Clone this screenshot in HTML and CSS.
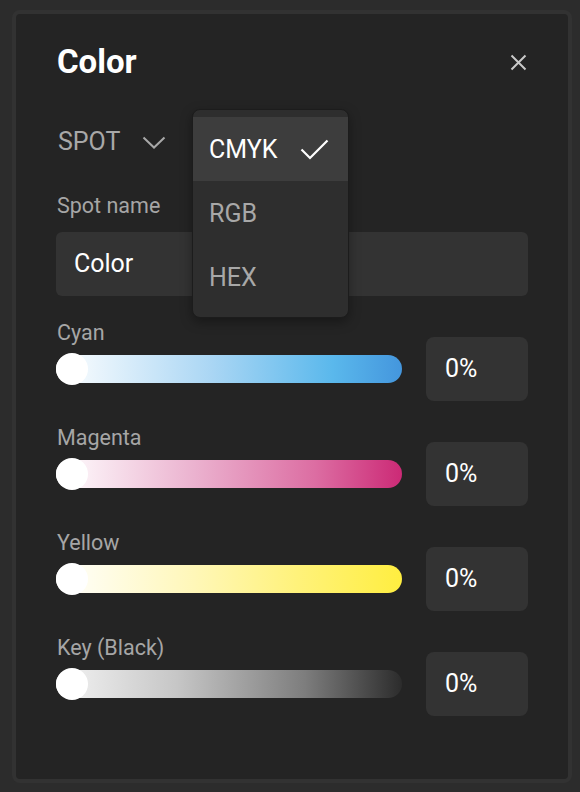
FILE: index.html
```html
<!DOCTYPE html>
<html lang="en">
<head>
<meta charset="utf-8">
<title>Color</title>
<link rel="stylesheet" href="styles.css">
</head>
<body>
<div class="panel">
  <div class="header">
    <h1 class="title">Color</h1>
    <button class="close" aria-label="Close">
      <svg width="17" height="17" viewBox="0 0 17 17"><path d="M1.5 1.5L15.5 15.5M15.5 1.5L1.5 15.5" stroke="#c9c9c9" stroke-width="2" fill="none"/></svg>
    </button>
  </div>

  <div class="mode">
    <span class="mode-label">SPOT</span>
    <svg class="chev" width="24" height="13" viewBox="0 0 24 13"><path d="M1.5 1.5L12 11.5L22.5 1.5" stroke="#a8a8a8" stroke-width="2" fill="none"/></svg>
  </div>

  <div class="field-label spot-label">Spot name</div>
  <div class="input">Color</div>

  <div class="sliders">
    <div class="group">
      <div class="field-label">Cyan</div>
      <div class="slider-row">
        <div class="track cyan"><span class="knob"></span></div>
        <div class="value">0%</div>
      </div>
    </div>
    <div class="group">
      <div class="field-label">Magenta</div>
      <div class="slider-row">
        <div class="track magenta"><span class="knob"></span></div>
        <div class="value">0%</div>
      </div>
    </div>
    <div class="group">
      <div class="field-label">Yellow</div>
      <div class="slider-row">
        <div class="track yellow"><span class="knob"></span></div>
        <div class="value">0%</div>
      </div>
    </div>
    <div class="group">
      <div class="field-label">Key (Black)</div>
      <div class="slider-row">
        <div class="track key"><span class="knob"></span></div>
        <div class="value">0%</div>
      </div>
    </div>
  </div>

  <div class="menu">
    <div class="menu-item active">
      <span>CMYK</span>
      <svg width="29" height="21" viewBox="0 0 29 21"><path d="M1.5 10.5L10 19L27.5 1.5" stroke="#ffffff" stroke-width="2.2" fill="none"/></svg>
    </div>
    <div class="menu-item">RGB</div>
    <div class="menu-item">HEX</div>
  </div>
</div>
</body>
</html>
```

FILE: styles.css
```css
* { box-sizing: border-box; }

html, body {
  margin: 0;
  background: #2c2c2c;
}

body {
  padding: 10px 8px 0 12px;
  font-family: Roboto, "Liberation Sans", Arial, sans-serif;
}

.panel {
  position: relative;
  width: 560px;
  height: 773px;
  border: 4px solid #323232;
  border-radius: 8px;
  background: #242424;
  padding: 28px 40px 0 40px;
}

.header {
  display: flex;
  align-items: center;
  justify-content: space-between;
  height: 40px;
}

.title {
  margin: 0 0 0 1px;
  font-size: 33px;
  font-weight: 700;
  line-height: 40px;
  color: #ffffff;
}

.close {
  display: flex;
  padding: 0;
  margin-right: 1px;
  border: 0;
  background: none;
}

.mode {
  display: flex;
  align-items: center;
  gap: 22px;
  height: 40px;
  margin-top: 40px;
  padding-left: 2px;
}

.mode-label {
  font-size: 25px;
  line-height: 40px;
  color: #a8a8a8;
}

.chev { margin-top: 1px; }

.field-label {
  font-size: 21.5px;
  line-height: 23px;
  color: #a6a6a6;
  padding-left: 1px;
}

.spot-label {
  margin-top: 32px;
}

.input {
  margin-top: 15px;
  height: 64px;
  border-radius: 6px;
  background: #333333;
  padding-left: 18px;
  font-size: 25px;
  line-height: 64px;
  color: #ffffff;
}

.sliders {
  display: flex;
  flex-direction: column;
  gap: 25px;
  margin-top: 25px;
}

.group .field-label {
  margin-bottom: -7px;
}

.slider-row {
  display: flex;
  align-items: center;
  gap: 24px;
  height: 64px;
}

.track {
  position: relative;
  flex: 1;
  height: 28px;
  border-radius: 14px;
}

.knob {
  position: absolute;
  left: 0;
  top: -2px;
  width: 32px;
  height: 32px;
  border-radius: 50%;
  background: #ffffff;
}

.cyan { background: linear-gradient(90deg, #ffffff 0%, #aad6f4 45%, #5ab8ec 80%, #4496dd 100%); }
.magenta { background: linear-gradient(90deg, #ffffff 0%, #ebb2cf 40%, #dc6da2 75%, #cc2a76 100%); }
.yellow { background: linear-gradient(90deg, #ffffff 0%, #fff7b8 40%, #fff27a 70%, #ffee40 100%); }
.key { background: linear-gradient(90deg, #f4f4f4 0%, #c6c6c6 35%, #7d7d7d 72%, #2c2c2c 100%); }

.value {
  width: 102px;
  height: 64px;
  border-radius: 8px;
  background: #333333;
  padding-left: 19px;
  font-size: 25px;
  line-height: 64px;
  color: #ffffff;
}

.menu {
  position: absolute;
  left: 176px;
  top: 95px;
  width: 157px;
  height: 209px;
  padding: 7px 0 8px;
  border: 1px solid #1c1c1c;
  border-radius: 8px;
  background: #2e2e2e;
  box-shadow: 0 4px 12px rgba(0, 0, 0, 0.35);
}

.menu-item {
  display: flex;
  align-items: center;
  justify-content: space-between;
  height: 64px;
  padding: 0 19px 0 16px;
  font-size: 25px;
  color: #a8a8a8;
}

.menu-item.active {
  background: #3d3d3d;
  color: #ffffff;
}
```
